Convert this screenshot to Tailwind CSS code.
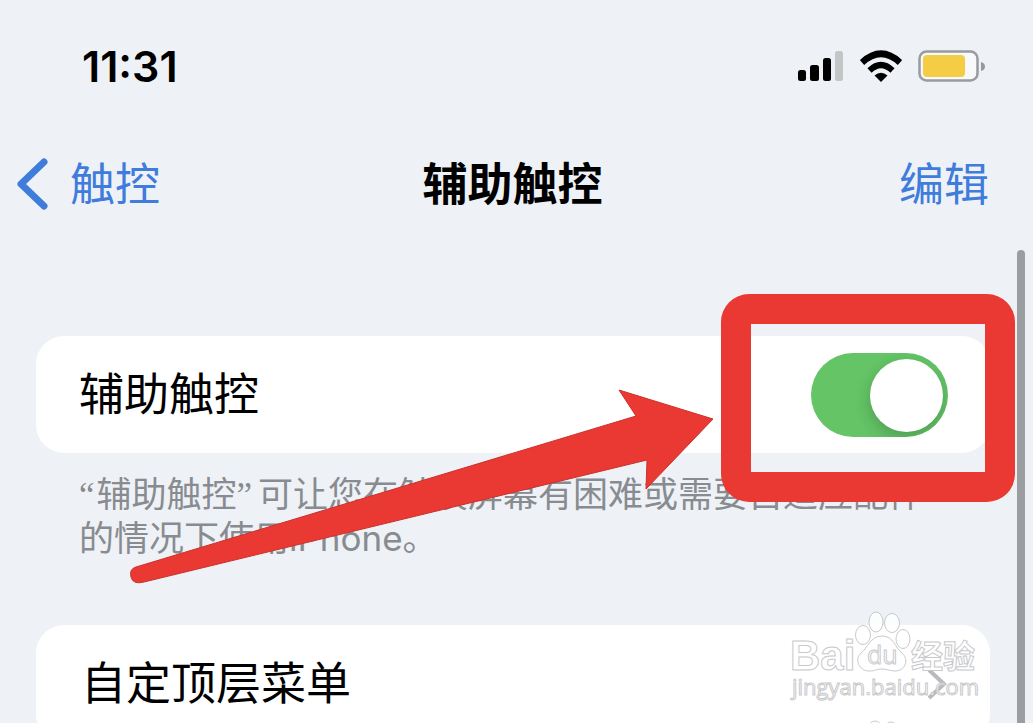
<!DOCTYPE html>
<html lang="zh-CN">
<head>
    <meta charset="UTF-8">
    <meta name="viewport" content="width=device-width, initial-scale=1.0">
    <title>辅助触控</title>
    <script src="https://cdn.jsdelivr.net/npm/@tailwindcss/browser@4"></script>
</head>
<body class="bg-[#eef2f6] text-black font-['Inter','Noto_Sans_CJK_SC',sans-serif]">
    <div class="relative flex h-screen flex-col overflow-hidden">
        <!-- Status bar -->
        <header class="flex h-32 shrink-0 items-center justify-between pt-1 pl-[82px] pr-12">
            <time class="text-[43px] leading-none font-semibold">11:31</time>
            <div class="flex items-center gap-4">
                <svg class="h-8 w-[46px]" viewBox="0 0 46 32" aria-label="信号">
                    <rect x="0" y="20" width="8" height="11" rx="2.5"/>
                    <rect x="12" y="15" width="9" height="16" rx="2.5"/>
                    <rect x="25" y="8" width="8" height="23" rx="2.5"/>
                    <rect x="37" y="1" width="8" height="30" rx="2.5" fill="#c3c5c7"/>
                </svg>
                <svg class="h-8 w-[42px]" viewBox="0 0 42 32" aria-label="无线局域网">
                    <path d="M2 12.500Q21-5 40 12.500" fill="none" stroke="#000" stroke-width="6.500"/>
                    <path d="M9.500 20.500Q21 9.500 32.500 20.500" fill="none" stroke="#000" stroke-width="6"/>
                    <path d="M14.500 25.500Q21 20 27.500 25.500L21 32Z"/>
                </svg>
                <svg class="h-8 w-[67px]" viewBox="0 0 67 32" aria-label="电池">
                    <rect x="1.500" y="1.500" width="58" height="29" rx="7" fill="#f8f9fb" stroke="#9a9b9f" stroke-width="2.500"/>
                    <rect x="5" y="5" width="42" height="22" rx="4" fill="#f5cc45"/>
                    <path d="M63 12q4 1 4 4.500t-4 4.500z" fill="#97989b"/>
                </svg>
            </div>
        </header>

        <!-- Navigation -->
        <nav class="grid h-28 shrink-0 grid-cols-[1fr_auto_1fr] items-center pl-4 pr-6 text-[45px] leading-none">
            <a href="#" class="flex items-center gap-[22px] text-[#3f7cdc]">
                <svg class="h-[52px] w-8" viewBox="0 0 32 52" fill="none" stroke="currentColor" stroke-width="7" stroke-linecap="round" stroke-linejoin="round">
                    <path d="M28 4L5 26L28 48"/>
                </svg>
                触控
            </a>
            <h1 class="font-bold">辅助触控</h1>
            <button type="button" class="mr-5 justify-self-end text-[#3f7cdc]">编辑</button>
        </nav>

        <main class="flex shrink-0 flex-col pt-24 pl-9 pr-[43px]">
            <section class="relative">
                <div class="flex h-[117px] items-center justify-between rounded-[28px] bg-white pl-[43px] pr-[42px]">
                    <label for="assistive" class="text-[45px] leading-none">辅助触控</label>
                    <input id="assistive" type="checkbox" role="switch" checked class="relative h-[84px] w-[137px] appearance-none overflow-hidden rounded-full bg-[#64c466] before:absolute before:top-[6px] before:right-[5px] before:size-[73px] before:rounded-full before:bg-white before:shadow-[0_6px_16px_rgba(0,0,0,0.2)]">
                </div>
                <p class="pt-5 pl-[43px] pr-10 text-[35px] leading-[43px] text-[#888b90]"><span class="mr-0.5 font-['Liberation_Serif',serif]">“</span>辅助触控<span class="mr-1.5 font-['Liberation_Serif',serif]">”</span>可让您在触摸屏幕有困难或需要自适应配件的情况下使用iPhone。</p>

                <!-- Highlight box and arrow -->
                <div class="absolute -top-[42px] -right-[25px] h-[208px] w-[294px] rounded-[28px] border-[30px] border-[#ea3832]"></div>
                <svg class="absolute top-[50px] right-[273px] h-[202px] w-[590px]" viewBox="0 0 590 202" fill="#ea3832" stroke="#c9322e" stroke-width="1">
                    <path d="M9 181L509 30L492 4L586 33L519 103L520 74L17 196Q6 199 4 191Q2 183 9 181Z"/>
                </svg>
            </section>

            <section class="mt-[65px] rounded-[28px] bg-white">
                <a href="#" class="flex h-[117px] items-center justify-between pl-[45px] pr-[43px] text-[45px] leading-none">
                    自定顶层菜单
                    <svg class="h-8 w-5" viewBox="0 0 20 32" fill="none" stroke="#b9babd" stroke-width="4">
                        <path d="M2 2L17 16L2 30"/>
                    </svg>
                </a>
            </section>
        </main>

        <!-- Scroll indicator -->
        <div class="absolute top-[250px] right-2 bottom-0 w-2 rounded-t-full bg-[#9b9ea1]"></div>

        <!-- Watermark -->
        <svg class="absolute right-[49px] bottom-0 h-28 w-[196px]" viewBox="0 0 196 112" fill="#fff" fill-opacity="0.8" stroke="#c8c9cb" stroke-width="1">
            <text x="2" y="59" font-family="Liberation Sans" font-size="42" font-weight="700">Bai</text>
            <ellipse cx="75" cy="24" rx="7.500" ry="9.500"/>
            <ellipse cx="88" cy="11" rx="7" ry="10"/>
            <ellipse cx="104" cy="12" rx="7.500" ry="9.500"/>
            <ellipse cx="115" cy="28" rx="7" ry="9.500"/>
            <path d="M94 25C82 25 80 37 73 42C66 48 71 60 81 60C88 60 88 58 94 58C100 58 101 60 108 60C118 59 121 48 114 42C107 37 106 25 94 25Z"/>
            <text x="79" y="53" font-family="Open Sans" font-size="25">du</text>
            <text x="123" y="57" font-family="Noto Sans CJK SC" font-size="32" font-weight="700">经验</text>
            <text x="4" y="84" font-family="Open Sans" font-size="22">jingyan.baidu.com</text>
            <ellipse cx="87" cy="118" rx="7" ry="8"/>
            <ellipse cx="103" cy="119" rx="7" ry="8"/>
        </svg>
    </div>
</body>
</html>
